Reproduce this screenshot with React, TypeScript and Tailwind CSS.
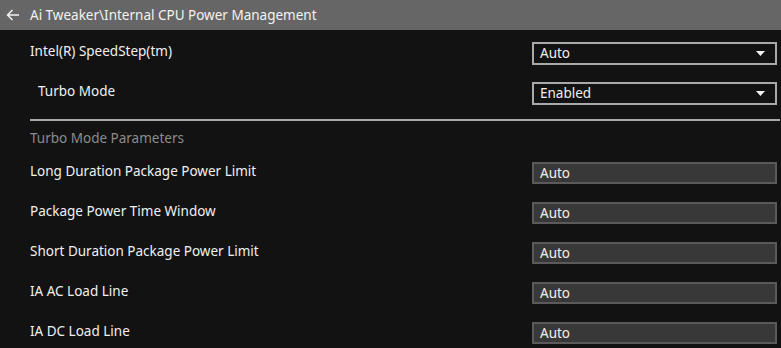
const font = { fontFamily: '"Noto Sans", "Open Sans", sans-serif' };

function Dropdown({ value }: { value: string }) {
    return (
        <div className="flex h-[23px] w-[245px] items-center justify-between border-2 border-[#a9a9a9] bg-[#121212] pl-[6px] pr-[10px] text-[13.5px] text-[#f0f0f0]">
            <span>{value}</span>
            <svg width="9" height="5" viewBox="0 0 9 5">
                <path d="M0 0H9L4.5 5Z" fill="#f0f0f0" />
            </svg>
        </div>
    );
}

function Field({ value }: { value: string }) {
    return (
        <div className="flex h-[22px] w-[245px] items-center border-2 border-[#5a5a5a] bg-[#383838] pl-[6px] text-[13.5px] text-[#f0f0f0]">
            {value}
        </div>
    );
}

function Row({ label, children, indent }: { label: string; children: React.ReactNode; indent?: boolean }) {
    return (
        <div className="flex h-10 items-center justify-between">
            <span className={`-mt-[3px] text-[13.5px] text-[#f0f0f0] ${indent ? 'pl-[8px]' : ''}`}>{label}</span>
            {children}
        </div>
    );
}

export default function App() {
    const params = [
        'Long Duration Package Power Limit',
        'Package Power Time Window',
        'Short Duration Package Power Limit',
        'IA AC Load Line',
        'IA DC Load Line',
    ];

    return (
        <div className="h-[348px] w-[781px] overflow-hidden bg-[#121212]" style={font}>
            <div className="flex h-[30px] items-center bg-[#666666] text-[13.5px] text-[#f2f2f2]">
                <svg className="ml-[6px]" width="14" height="12" viewBox="0 0 14 12">
                    <path d="M13 6H1.5M6.5 1L1.5 6L6.5 11" stroke="#f2f2f2" strokeWidth="1.5" fill="none" />
                </svg>
                <span className="ml-[10px]">Ai Tweaker\Internal CPU Power Management</span>
            </div>
            <div className="pl-[30px] pr-[4px] pt-[3px]">
                <Row label="Intel(R) SpeedStep(tm)">
                    <Dropdown value="Auto" />
                </Row>
                <Row label="Turbo Mode" indent>
                    <Dropdown value="Enabled" />
                </Row>
                <div className="-mr-[3px] mt-[6px] h-[2px] bg-[#a9a9a9]" />
                <div className="h-[32px] pt-[7px] text-[13.5px] leading-[20px] text-[#8c8c8c]">Turbo Mode Parameters</div>
                {params.map((p) => (
                    <Row key={p} label={p}>
                        <Field value="Auto" />
                    </Row>
                ))}
            </div>
        </div>
    );
}
